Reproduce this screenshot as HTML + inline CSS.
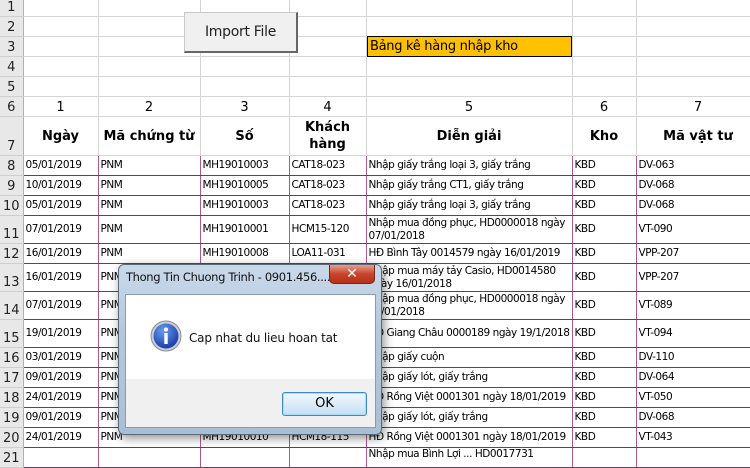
<!DOCTYPE html>
<html><head><meta charset="utf-8"><style>
*{margin:0;padding:0;box-sizing:border-box}
body{width:750px;height:453px;overflow:hidden;background:#fff;font-family:"DejaVu Sans","Liberation Sans",sans-serif;position:relative}
table{border-collapse:collapse;table-layout:fixed;position:absolute;left:0;top:0;width:760px}
td{border-right:1px solid #d4d4d4;border-bottom:1px solid #d4d4d4;font-size:10.5px;letter-spacing:-0.45px;white-space:nowrap;overflow:hidden;vertical-align:middle;padding:0 2px;color:#000;line-height:13px}
td.h{background:#e8e8e8;border-right:1px solid #b0b0b0;border-bottom:1px solid #cfcfcf;text-align:center;font-size:13px;letter-spacing:0;padding:0;color:#222;vertical-align:bottom;line-height:16px}
tr.d td:not(.h){border-right:1px solid #b05a8c;border-bottom:1px solid #8a2d5c}
td.c{text-align:center;font-size:13px;letter-spacing:0;vertical-align:bottom;line-height:16px}
td.b{text-align:center;font-weight:bold;font-size:13px;letter-spacing:0;white-space:normal;vertical-align:middle;line-height:17px}
td.w{white-space:normal;line-height:13px}
.btn{position:absolute;left:184px;top:12px;width:114px;height:41px;background:#f0f0f0;border:1px solid #c8c8c8;border-right:2px solid #666;border-bottom:2px solid #666;font:14px "DejaVu Sans",sans-serif;color:#222;text-align:center;line-height:38px;letter-spacing:-0.3px}
.tit{position:absolute;left:367px;top:36px;width:205px;height:21px;background:#ffc000;border:1px solid #000;font-size:13px;line-height:19px;padding-left:2px;letter-spacing:-0.3px}
.dlg{position:absolute;left:118px;top:264px;width:264px;height:171px;border:1px solid #5a6a7a;border-radius:6px;background:linear-gradient(#c9d9ea,#b4c8dd 40%,#aabfd6);box-shadow:2px 3px 10px rgba(0,0,0,.45)}
.dt{position:absolute;left:7px;top:5px;font-size:11.5px;color:#111;letter-spacing:-0.35px;white-space:nowrap}
.x{position:absolute;left:210px;top:0;width:46px;height:19px;border:1px solid #6b2a20;border-top:none;border-radius:0 0 5px 5px;background:linear-gradient(#e8a08c,#c8442c 50%,#b83018);color:#fff;font-weight:bold;text-align:center;font-size:14px;line-height:18px}
.body{position:absolute;left:6px;top:29px;width:251px;height:134px;border:1px solid #8a9bb0;background:#f0f0f0}
.wh{position:absolute;left:0;top:0;width:249px;height:84px;background:#fff}
.msg{position:absolute;left:63px;top:36px;font-size:12px;color:#111;letter-spacing:-0.2px}
.ok{position:absolute;left:156px;top:97px;width:85px;height:24px;border:1px solid #3c8ac8;border-radius:3px;background:linear-gradient(#f0f8fe,#dcecf8 50%,#c4dff2);text-align:center;font-size:13px;line-height:22px;box-shadow:inset 0 0 0 1px #a8dcf8}
</style></head><body>
<table>
<colgroup><col style="width:23px"><col style="width:75px"><col style="width:102px"><col style="width:89px"><col style="width:77px"><col style="width:206px"><col style="width:64px"><col style="width:124px"></colgroup>
<tr style="height:16px"><td class="h">1</td><td></td><td></td><td></td><td></td><td></td><td></td><td></td></tr>
<tr style="height:20px"><td class="h">2</td><td></td><td></td><td></td><td></td><td></td><td></td><td></td></tr>
<tr style="height:20px"><td class="h">3</td><td></td><td></td><td></td><td></td><td></td><td></td><td></td></tr>
<tr style="height:20px"><td class="h">4</td><td></td><td></td><td></td><td></td><td></td><td></td><td></td></tr>
<tr style="height:20px"><td class="h">5</td><td></td><td></td><td></td><td></td><td></td><td></td><td></td></tr>
<tr style="height:20px"><td class="h">6</td><td class="c">1</td><td class="c">2</td><td class="c">3</td><td class="c">4</td><td class="c">5</td><td class="c">6</td><td class="c">7</td></tr>
<tr style="height:39px"><td class="h">7</td><td class="b">Ngày</td><td class="b">Mã chứng từ</td><td class="b">Số</td><td class="b">Khách hàng</td><td class="b">Diễn giải</td><td class="b">Kho</td><td class="b">Mã vật tư</td></tr>
<tr class="d" style="height:20px"><td class="h">8</td><td>05/01/2019</td><td>PNM</td><td>MH19010003</td><td>CAT18-023</td><td>Nhập giấy trắng loại 3, giấy trắng</td><td>KBD</td><td>DV-063</td></tr>
<tr class="d" style="height:20px"><td class="h">9</td><td>10/01/2019</td><td>PNM</td><td>MH19010005</td><td>CAT18-023</td><td>Nhập giấy trắng CT1, giấy trắng</td><td>KBD</td><td>DV-068</td></tr>
<tr class="d" style="height:20px"><td class="h">10</td><td>05/01/2019</td><td>PNM</td><td>MH19010003</td><td>CAT18-023</td><td>Nhập giấy trắng loại 3, giấy trắng</td><td>KBD</td><td>DV-068</td></tr>
<tr class="d" style="height:28px"><td class="h">11</td><td>07/01/2019</td><td>PNM</td><td>MH19010001</td><td>HCM15-120</td><td class="w">Nhập mua đồng phục, HD0000018 ngày 07/01/2018</td><td>KBD</td><td>VT-090</td></tr>
<tr class="d" style="height:20px"><td class="h">12</td><td>16/01/2019</td><td>PNM</td><td>MH19010008</td><td>LOA11-031</td><td>HĐ Bình Tây 0014579 ngày 16/01/2019</td><td>KBD</td><td>VPP-207</td></tr>
<tr class="d" style="height:28px"><td class="h">13</td><td>16/01/2019</td><td>PNM</td><td>MH19010008</td><td>LOA11-031</td><td class="w">Nhập mua máy tảy Casio, HD0014580 ngày 16/01/2018</td><td>KBD</td><td>VPP-207</td></tr>
<tr class="d" style="height:28px"><td class="h">14</td><td>07/01/2019</td><td>PNM</td><td>MH19010001</td><td>HCM15-120</td><td class="w">Nhập mua đồng phục, HD0000018 ngày 07/01/2018</td><td>KBD</td><td>VT-089</td></tr>
<tr class="d" style="height:28px"><td class="h">15</td><td>19/01/2019</td><td>PNM</td><td>MH19010009</td><td>HCM18-115</td><td>HĐ Giang Châu 0000189 ngày 19/1/2018</td><td>KBD</td><td>VT-094</td></tr>
<tr class="d" style="height:20px"><td class="h">16</td><td>03/01/2019</td><td>PNM</td><td>MH19010002</td><td>CAT18-023</td><td>Nhập giấy cuộn</td><td>KBD</td><td>DV-110</td></tr>
<tr class="d" style="height:20px"><td class="h">17</td><td>09/01/2019</td><td>PNM</td><td>MH19010004</td><td>CAT18-023</td><td>Nhập giấy lót, giấy trắng</td><td>KBD</td><td>DV-064</td></tr>
<tr class="d" style="height:20px"><td class="h">18</td><td>24/01/2019</td><td>PNM</td><td>MH19010010</td><td>HCM18-115</td><td>HĐ Rồng Việt 0001301 ngày 18/01/2019</td><td>KBD</td><td>VT-050</td></tr>
<tr class="d" style="height:20px"><td class="h">19</td><td>09/01/2019</td><td>PNM</td><td>MH19010004</td><td>CAT18-023</td><td>Nhập giấy lót, giấy trắng</td><td>KBD</td><td>DV-068</td></tr>
<tr class="d" style="height:20px"><td class="h">20</td><td>24/01/2019</td><td>PNM</td><td>MH19010010</td><td>HCM18-115</td><td>HĐ Rồng Việt 0001301 ngày 18/01/2019</td><td>KBD</td><td>VT-043</td></tr>
<tr class="d" style="height:20px"><td class="h">21</td><td></td><td></td><td></td><td></td><td style="vertical-align:top">Nhập mua Bình Lợi ... HD0017731</td><td></td><td></td></tr>
</table>
<div class="btn">Import File</div>
<div class="tit">Bảng kê hàng nhập kho</div>
<div class="dlg">
<div class="dt">Thong Tin Chuong Trinh - 0901.456....</div>
<div class="x">✕</div>
<div class="body">
<div class="wh">
<svg style="position:absolute;left:24px;top:25px" width="32" height="32" viewBox="0 0 32 32"><defs><radialGradient id="g" cx="40%" cy="30%" r="70%"><stop offset="0" stop-color="#6a9cf0"/><stop offset="1" stop-color="#1a3fa8"/></radialGradient></defs><circle cx="16" cy="16" r="15" fill="#c8ccd4" stroke="#8a8f99"/><circle cx="16" cy="16" r="12.5" fill="url(#g)"/><circle cx="16" cy="9.5" r="2" fill="#fff"/><rect x="14.3" y="13" width="3.4" height="11" fill="#fff"/></svg>
<div class="msg">Cap nhat du lieu hoan tat</div>
</div>
<div class="ok">OK</div>
</div>
</div>
</body></html>
